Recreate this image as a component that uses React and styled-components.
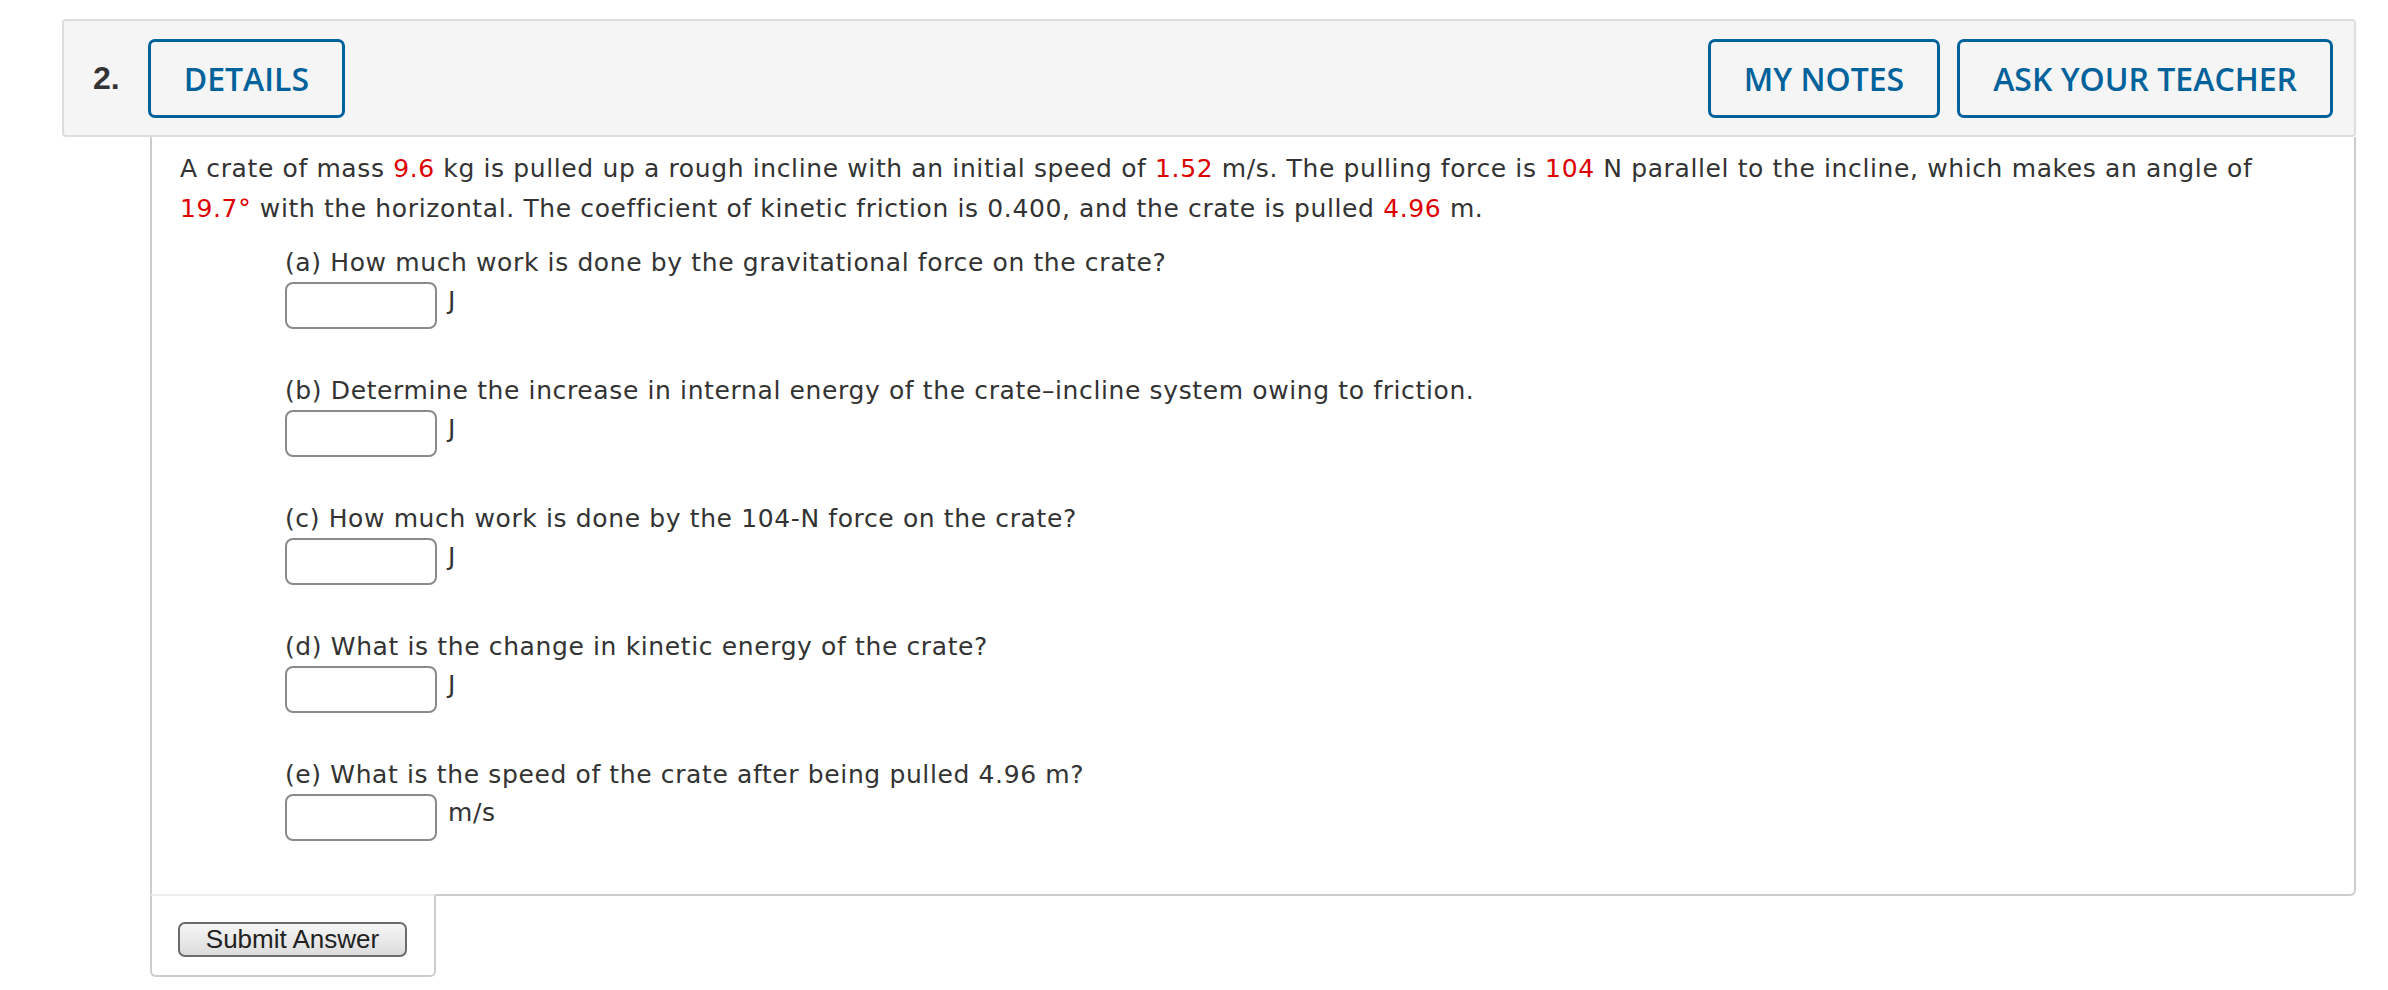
import React from 'react';
import styled, { createGlobalStyle } from 'styled-components';

const GlobalStyle = createGlobalStyle`
  body {
    margin: 0;
    background: #fff;
  }
`;

const Page = styled.div`
  padding: 19px 32px 0 62px;
`;

const Header = styled.div`
  box-sizing: border-box;
  height: 118px;
  display: flex;
  align-items: center;
  gap: 28px;
  padding: 0 21px 0 29px;
  background: #f5f5f5;
  border: 2px solid #ddd;
  border-radius: 4px;
`;

const Number = styled.span`
  font-family: "Liberation Sans", Arial, sans-serif;
  font-weight: bold;
  font-size: 32px;
  color: #333;
`;

const HeaderButton = styled.button`
  box-sizing: border-box;
  height: 79px;
  padding: 0 33px;
  background: transparent;
  border: 3px solid #00629b;
  border-radius: 7px;
  color: #00629b;
  font-family: "Open Sans", sans-serif;
  font-weight: 600;
  font-size: 32px;
  cursor: pointer;
`;

const Spacer = styled.div`
  flex: 1;
`;

const RightButtons = styled.div`
  display: flex;
  gap: 17px;
`;

const Body = styled.div`
  margin-left: 88px;
  padding: 12px 40px 10px 28px;
  border: 2px solid #ccc;
  border-top: none;
  border-radius: 0 0 6px 0;
  font-family: "DejaVu Sans", Verdana, sans-serif;
  font-size: 25px;
  letter-spacing: 0.62px;
  color: #333;
`;

const Intro = styled.p`
  margin: 0 0 15px 0;
  line-height: 40px;
`;

const Red = styled.span`
  color: #dd0000;
`;

const Parts = styled.div`
  padding-left: 105px;
`;

const Part = styled.div`
  margin-bottom: 43px;
`;

const Question = styled.div`
  line-height: 38px;
`;

const AnswerRow = styled.div`
  display: flex;
  align-items: flex-start;
  gap: 11px;
`;

const AnswerBox = styled.input`
  box-sizing: border-box;
  width: 152px;
  height: 47px;
  margin: 0;
  border: 2px solid #8a8a8a;
  border-radius: 8px;
  background: #fff;
`;

const Unit = styled.span`
  line-height: 38px;
`;

const SubmitArea = styled.div`
  box-sizing: border-box;
  width: 286px;
  margin: -2px 0 0 88px;
  padding: 26px 0 18px 26px;
  border: 2px solid #ccc;
  border-top-color: #eee;
  border-radius: 0 0 6px 6px;
`;

const SubmitButton = styled.button`
  box-sizing: border-box;
  width: 229px;
  height: 35px;
  padding: 0;
  border: 2px solid #6b6b6b;
  border-radius: 7px;
  background: linear-gradient(#f6f6f6, #dcdcdc);
  color: #222;
  font-family: "Liberation Sans", Arial, sans-serif;
  font-size: 26px;
  line-height: 31px;
  display: block;
`;

const parts = [
  { label: '(a) How much work is done by the gravitational force on the crate?', unit: 'J' },
  { label: '(b) Determine the increase in internal energy of the crate\u2013incline system owing to friction.', unit: 'J' },
  { label: '(c) How much work is done by the 104-N force on the crate?', unit: 'J' },
  { label: '(d) What is the change in kinetic energy of the crate?', unit: 'J' },
  { label: '(e) What is the speed of the crate after being pulled 4.96 m?', unit: 'm/s' },
];

export default function App() {
  return (
    <Page>
      <GlobalStyle />
      <Header>
        <Number>2.</Number>
        <HeaderButton>DETAILS</HeaderButton>
        <Spacer />
        <RightButtons>
          <HeaderButton>MY NOTES</HeaderButton>
          <HeaderButton>ASK YOUR TEACHER</HeaderButton>
        </RightButtons>
      </Header>

      <Body>
        <Intro>
          A crate of mass <Red>9.6</Red> kg is pulled up a rough incline with an initial speed of{' '}
          <Red>1.52</Red> m/s. The pulling force is <Red>104</Red> N parallel to the incline, which
          makes an angle of <Red>19.7°</Red> with the horizontal. The coefficient of kinetic friction
          is 0.400, and the crate is pulled <Red>4.96</Red> m.
        </Intro>
        <Parts>
          {parts.map((p) => (
            <Part key={p.label}>
              <Question>{p.label}</Question>
              <AnswerRow>
                <AnswerBox type="text" />
                <Unit>{p.unit}</Unit>
              </AnswerRow>
            </Part>
          ))}
        </Parts>
      </Body>

      <SubmitArea>
        <SubmitButton>Submit Answer</SubmitButton>
      </SubmitArea>
    </Page>
  );
}
